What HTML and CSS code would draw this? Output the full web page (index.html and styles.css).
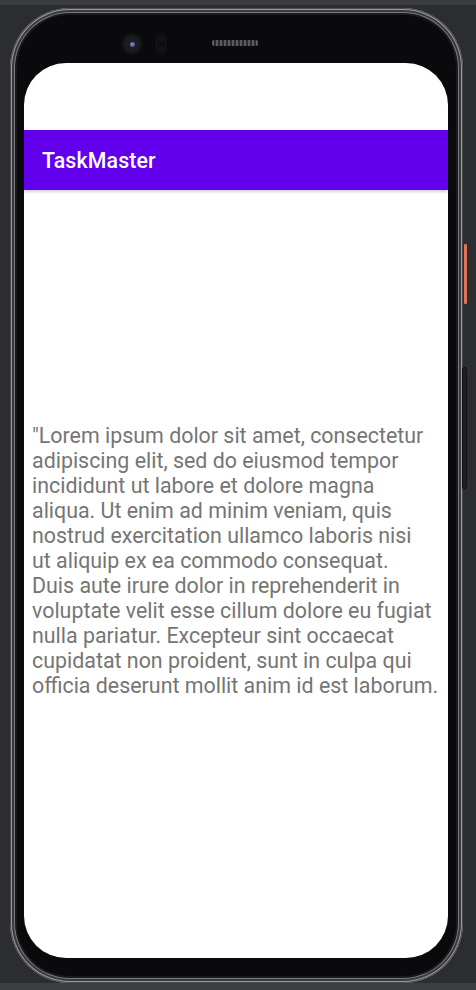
FILE: index.html
```html
<!DOCTYPE html>
<html>
<head>
<meta charset="utf-8">
<link rel="stylesheet" href="styles.css">
</head>
<body>
<div class="topstrip"></div>
<div class="stage">
  <div class="phone">
    <div class="bezel-top">
      <div class="camera"><div class="lens"></div></div>
      <div class="sensor"><span></span><span></span></div>
      <div class="speaker"></div>
    </div>
    <div class="screen">
      <div class="statusbar"></div>
      <div class="toolbar"><span class="title">TaskMaster</span></div>
      <div class="content">
        <p class="lorem">"Lorem ipsum dolor sit amet, consectetur<br>adipiscing elit, sed do eiusmod tempor<br>incididunt ut labore et dolore magna<br>aliqua. Ut enim ad minim veniam, quis<br>nostrud exercitation ullamco laboris nisi<br>ut aliquip ex ea commodo consequat.<br>Duis aute irure dolor in reprehenderit in<br>voluptate velit esse cillum dolore eu fugiat<br>nulla pariatur. Excepteur sint occaecat<br>cupidatat non proident, sunt in culpa qui<br>officia deserunt mollit anim id est laborum.</p>
      </div>
    </div>
    <div class="btn-power"></div>
    <div class="btn-volume"></div>
  </div>
</div>
<div class="bottomstrip"></div>
</body>
</html>
```
FILE: styles.css
```css
html, body {
  margin: 0;
  padding: 0;
}
body {
  width: 476px;
  height: 990px;
  overflow: hidden;
  background: #2c2d2f;
  font-family: Roboto, "Noto Sans", sans-serif;
}
.topstrip {
  height: 5px;
  background: #3b3e41;
}
.stage {
  padding: 3px 0 0 10px;
  height: 978px;
  box-sizing: border-box;
}
.phone {
  position: relative;
  width: 453px;
  height: 975px;
  box-sizing: border-box;
  padding: 0 15px 0 14px;
  border-radius: 60px;
  background: #0a0a0c;
  box-shadow:
    inset 0 0 0 1px #4a4a4c,
    inset 0 0 0 2px #9a9a9c,
    inset 0 0 0 4px #3a3a3c,
    inset 0 0 0 5px #7a7a7c,
    inset 0 0 0 7px #1a1a1c;
}
.bezel-top {
  height: 55px;
  display: flex;
  align-items: flex-start;
  padding-left: 97px;
  padding-top: 25px;
  box-sizing: border-box;
}
.camera {
  width: 22px;
  height: 22px;
  border-radius: 50%;
  background: radial-gradient(circle, #1c1c24 0 45%, #121215 60%, #0d0d0f 100%);
  display: flex;
  align-items: center;
  justify-content: center;
}
.lens {
  width: 5px;
  height: 5px;
  border-radius: 50%;
  background: radial-gradient(circle at 40% 40%, #8a90c8, #3a3e6a);
}
.sensor {
  margin-left: 13px;
  width: 10px;
  height: 22px;
  border-radius: 5px;
  background: #0e0e10;
  border: 1px solid #18181b;
  box-sizing: border-box;
  display: flex;
  flex-direction: column;
  align-items: center;
  justify-content: space-around;
}
.sensor span {
  width: 6px;
  height: 6px;
  border-radius: 50%;
  background: #141417;
}
.speaker {
  margin-left: 46px;
  margin-top: 7px;
  width: 46px;
  height: 6px;
  border-radius: 2px;
  background: repeating-linear-gradient(90deg, #5a5a5e 0 2px, #2a2a2e 2px 4px);
}
.screen {
  height: 895px;
  background: #ffffff;
  border-radius: 42px;
  overflow: hidden;
}
.statusbar {
  height: 67px;
}
.toolbar {
  height: 60px;
  background: #6200ee;
  display: flex;
  align-items: center;
  padding-left: 18px;
  box-shadow: 0 2px 3px rgba(0,0,0,0.18);
  position: relative;
}
.title {
  color: #ffffff;
  font-size: 21.3px;
  font-weight: 500;
  letter-spacing: 0.15px;
}
.content {
  padding: 233px 2px 0 8px;
}
.lorem {
  margin: 0;
  font-size: 21.4px;
  line-height: 25px;
  color: #757575;
  white-space: nowrap;
}
.btn-power {
  position: absolute;
  right: -4px;
  top: 236px;
  width: 3px;
  height: 60px;
  background: #e0735a;
  border-radius: 1px;
}
.btn-volume {
  position: absolute;
  right: -4px;
  top: 359px;
  width: 3px;
  height: 120px;
  background: #1e1e20;
  border: 1px solid #141416;
  border-radius: 2px;
}
.bottomstrip {
  height: 7px;
  background: #3b3e41;
}
```
